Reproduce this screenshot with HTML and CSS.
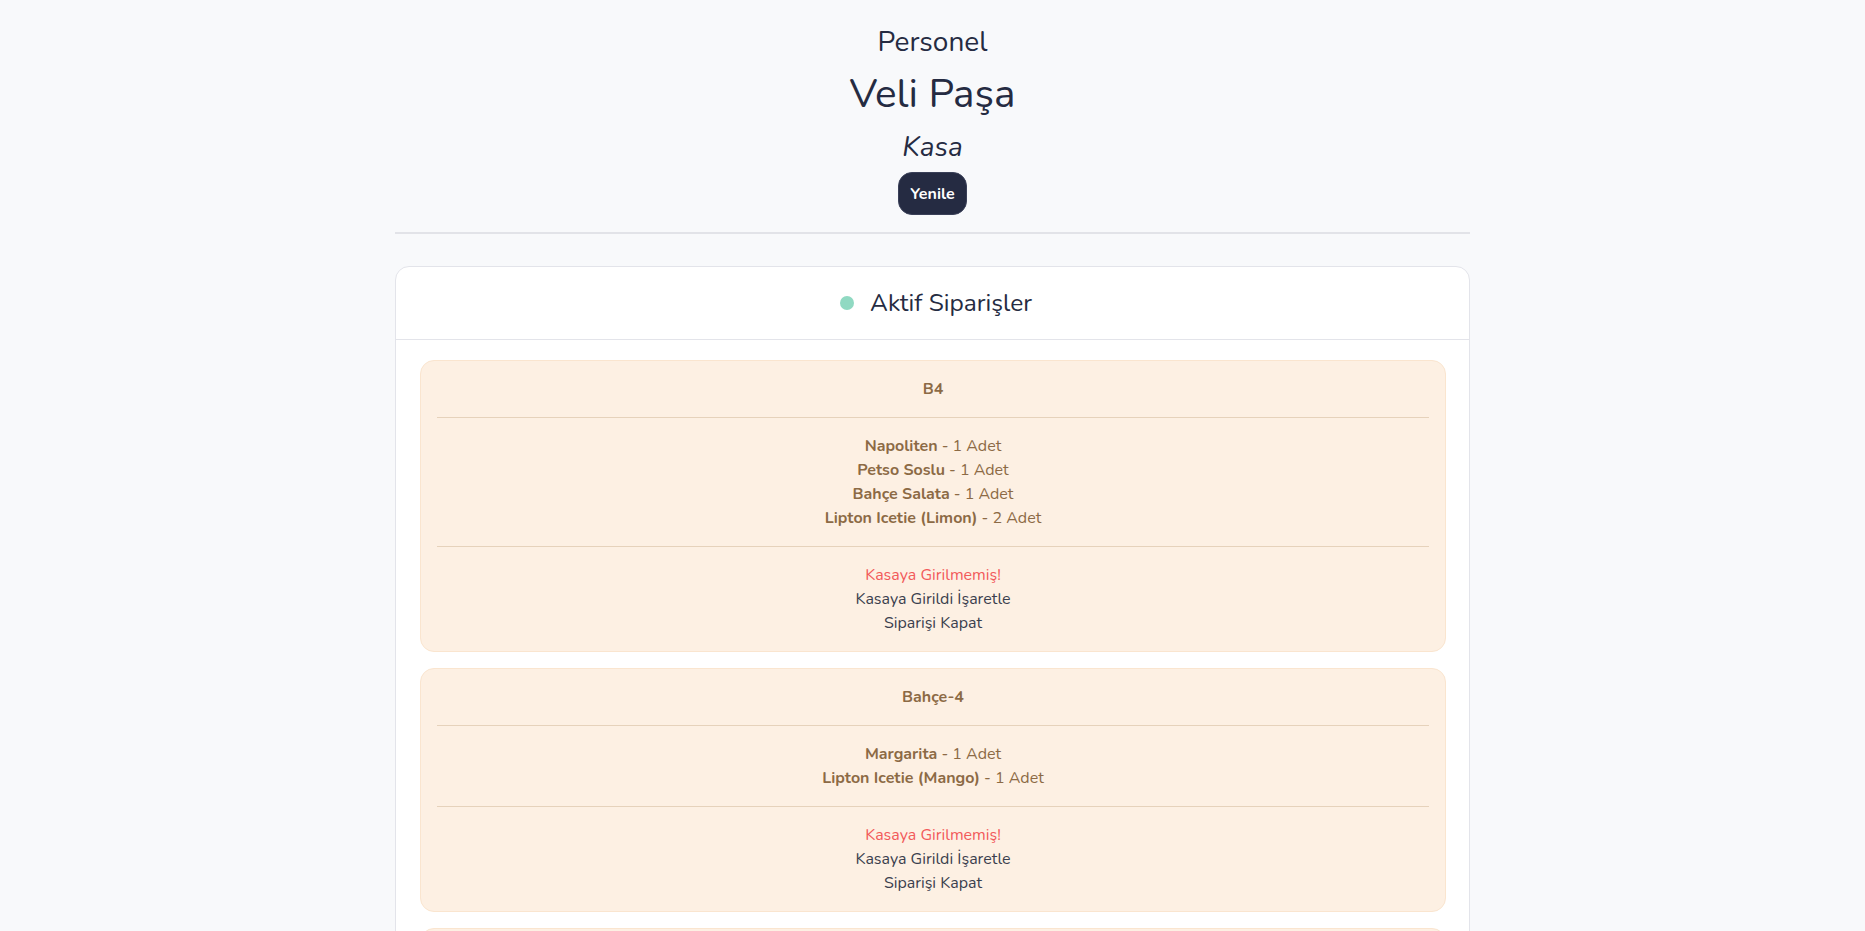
FILE: index.html
```html
<!DOCTYPE html>
<html lang="tr">
<head>
<meta charset="utf-8">
<title>Kasa</title>
<link rel="stylesheet" href="styles.css">
</head>
<body>
<div class="page">
  <header class="head">
    <div class="role">Personel</div>
    <div class="name">Veli Paşa</div>
    <div class="dept">Kasa</div>
    <button class="btn">Yenile</button>
  </header>

  <section class="panel">
    <div class="panel-head"><span class="dot"></span><span>Aktif Siparişler</span></div>
    <div class="panel-body">
      <div class="order">
        <div class="order-title">B4</div>
        <hr class="sep">
        <div class="items">
          <div><b>Napoliten</b> - 1 Adet</div>
          <div><b>Petso Soslu</b> - 1 Adet</div>
          <div><b>Bahçe Salata</b> - 1 Adet</div>
          <div><b>Lipton Icetie (Limon)</b> - 2 Adet</div>
        </div>
        <hr class="sep">
        <div class="actions">
          <div class="warn">Kasaya Girilmemiş!</div>
          <div class="act">Kasaya Girildi İşaretle</div>
          <div class="act">Siparişi Kapat</div>
        </div>
      </div>

      <div class="order">
        <div class="order-title">Bahçe-4</div>
        <hr class="sep">
        <div class="items">
          <div><b>Margarita</b> - 1 Adet</div>
          <div><b>Lipton Icetie (Mango)</b> - 1 Adet</div>
        </div>
        <hr class="sep">
        <div class="actions">
          <div class="warn">Kasaya Girilmemiş!</div>
          <div class="act">Kasaya Girildi İşaretle</div>
          <div class="act">Siparişi Kapat</div>
        </div>
      </div>

      <div class="order">
        <div class="order-title">B2</div>
        <hr class="sep">
        <div class="items">
          <div><b>Margarita</b> - 1 Adet</div>
        </div>
        <hr class="sep">
        <div class="actions">
          <div class="warn">Kasaya Girilmemiş!</div>
          <div class="act">Kasaya Girildi İşaretle</div>
          <div class="act">Siparişi Kapat</div>
        </div>
      </div>
    </div>
  </section>
</div>
</body>
</html>
```

FILE: styles.css
```css
* { box-sizing: border-box; }
html, body {
  margin: 0;
  padding: 0;
  background: #f8f9fb;
  font-family: "Nunito", Lato, "Noto Sans", sans-serif;
  color: #252b42;
}
.page {
  width: 1075px;
  margin: 0 auto;
}
.head {
  display: flex;
  flex-direction: column;
  align-items: center;
  padding-top: 24px;
  padding-bottom: 17px;
  border-bottom: 2px solid #e2e3e8;
}
.role {
  font-size: 28px;
  line-height: 36px;
}
.name {
  font-size: 40.5px;
  line-height: 48px;
  margin-top: 10px;
}
.dept {
  font-size: 28px;
  line-height: 32px;
  font-style: italic;
  margin-top: 13px;
}
.btn {
  margin-top: 9px;
  height: 43px;
  padding: 0 11px;
  background: #252b42;
  color: #fff;
  border: 1px solid #3a4058;
  border-radius: 14px;
  font-family: inherit;
  font-weight: 700;
  font-size: 16px;
}
.panel {
  margin-top: 32px;
  background: #fff;
  border: 1px solid #e3e4ea;
  border-radius: 14px;
}
.panel-head {
  display: flex;
  align-items: center;
  justify-content: center;
  gap: 16px;
  padding: 18px 0 18px 7px;
  line-height: 36px;
  font-size: 24.5px;
  border-bottom: 1px solid #e3e4ea;
}
.dot {
  width: 14px;
  height: 14px;
  border-radius: 50%;
  background: #90d9c2;
}
.panel-body {
  display: flex;
  flex-direction: column;
  gap: 16px;
  padding: 20px 23px 20px 24px;
}
.order {
  background: #fdf0e3;
  border: 1px solid #fae5cf;
  border-radius: 14px;
  padding: 16px;
  text-align: center;
  font-size: 16px;
  line-height: 24px;
  color: #8c6a45;
}
.order-title {
  font-weight: 700;
}
.sep {
  border: 0;
  border-top: 1px solid #e6d2bb;
  margin: 16px 0;
}
.items b {
  font-weight: 700;
}
.warn {
  color: #f25a5a;
}
.act {
  color: #3b3f4e;
}
```
